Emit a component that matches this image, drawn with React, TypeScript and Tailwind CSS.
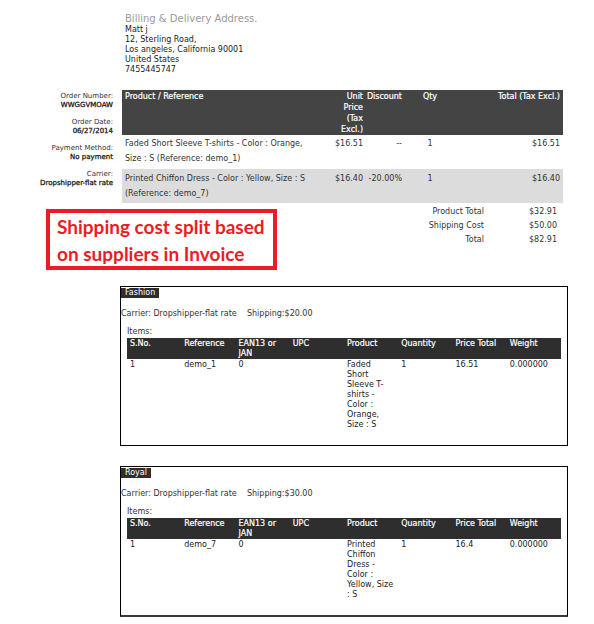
import React from "react";

const font = { fontFamily: "'DejaVu Sans',sans-serif" };

function LeftLabels() {
  const items: [string, string][] = [
    ["Order Number:", "WWGGVMOAW"],
    ["Order Date:", "06/27/2014"],
    ["Payment Method:", "No payment"],
    ["Carrier:", "Dropshipper-flat rate"],
  ];
  return (
    <div className="w-[122px] pr-[9px] pt-[2px] text-right text-[7px] leading-[8.5px] text-[#333] flex flex-col gap-[9px]">
      {items.map(([l, v]) => (
        <div key={l}>
          <div>{l}</div>
          <div className="text-[#111] [-webkit-text-stroke:0.25px_#111]">{v}</div>
        </div>
      ))}
    </div>
  );
}

function MainTable() {
  return (
    <div className="w-[441px]">
      <table className="table-fixed w-[441px] border-collapse text-[8px]">
        <colgroup>
          <col className="w-[208px]" />
          <col className="w-[36px]" />
          <col className="w-[38px]" />
          <col className="w-[52px]" />
          <col className="w-[107px]" />
        </colgroup>
        <thead>
          <tr className="bg-[#444444] text-white align-top leading-[11px] h-[45px] [-webkit-text-stroke:0.2px_#fff]">
            <th className="text-left font-normal px-[3px] pt-[1px]">Product / Reference</th>
            <th className="text-right font-normal pl-0 pr-[3px] pt-[1px]">
              Unit
              <br />
              Price
              <br />
              (Tax
              <br />
              Excl.)
            </th>
            <th className="text-right font-normal pl-0 pr-[2px] pt-[1px] whitespace-nowrap">Discount</th>
            <th className="text-center font-normal px-[3px] pt-[1px]">Qty</th>
            <th className="text-right font-normal px-[3px] pt-[1px]">Total (Tax Excl.)</th>
          </tr>
        </thead>
        <tbody className="text-[#333] leading-[15px] align-top">
          <tr className="bg-white h-[34px]">
            <td className="px-[3px] pt-[1px]">
              Faded Short Sleeve T-shirts - Color : Orange,
              <br />
              Size : S (Reference: demo_1)
            </td>
            <td className="pl-0 pr-[3px] pt-[1px] text-right">$16.51</td>
            <td className="pl-0 pr-[2px] pt-[1px] text-right">--</td>
            <td className="px-[3px] pt-[1px] text-center">1</td>
            <td className="px-[3px] pt-[1px] text-right">$16.51</td>
          </tr>
          <tr className="bg-[#dcdcdc] h-[34px]">
            <td className="px-[3px] pt-[2px]">
              Printed Chiffon Dress - Color : Yellow, Size : S
              <br />
              (Reference: demo_7)
            </td>
            <td className="pl-0 pr-[3px] pt-[2px] text-right">$16.40</td>
            <td className="pl-0 pr-[2px] pt-[2px] text-right whitespace-nowrap">-20.00%</td>
            <td className="px-[3px] pt-[2px] text-center">1</td>
            <td className="px-[3px] pt-[2px] text-right">$16.40</td>
          </tr>
        </tbody>
      </table>
    </div>
  );
}

type Item = { sno: string; ref: string; ean: string; upc: string; product: string[]; qty: string; price: string; weight: string };

function SupplierBox({ name, shipping, item, h }: { name: string; shipping: string; item: Item; h: string }) {
  const cells: React.ReactNode[] = [
    item.sno,
    item.ref,
    item.ean,
    item.upc,
    item.product.map((l, i) => (
      <div key={i} className="whitespace-nowrap">
        {l}
      </div>
    )),
    item.qty,
    item.price,
    item.weight,
  ];
  return (
    <div className={`ml-[120px] w-[448px] border border-black ${h} text-[8px] text-[#333]`}>
      <div className="inline-block bg-[#2e2e2e] text-white px-[4px] leading-[10px] h-[10px] text-[8px]">{name}</div>
      <div className="mt-[9px] leading-[12px] whitespace-pre">{"Carrier: Dropshipper-flat rate    Shipping:" + shipping}</div>
      <div className="mx-[6px] mt-[7px]">
        <div className="leading-[10px]">Items:</div>
        <table className="table-fixed w-full border-collapse mt-[1px]">
          <tbody>
            <tr className="bg-[#2e2e2e] text-white align-top leading-[10px] h-[20px] [-webkit-text-stroke:0.2px_#fff]">
              {["S.No.", "Reference", "EAN13 or JAN", "UPC", "Product", "Quantity", "Price Total", "Weight"].map((t) => (
                <td key={t} className="px-[3px] w-[54px] pt-[1px]">
                  {t}
                </td>
              ))}
            </tr>
            <tr className="align-top leading-[10px] text-[#222]">
              {cells.map((t, i) => (
                <td key={i} className="px-[3px] pt-[1px]">
                  {t}
                </td>
              ))}
            </tr>
          </tbody>
        </table>
      </div>
    </div>
  );
}

export default function App() {
  return (
    <div className="w-[594px] h-[624px] bg-white overflow-hidden" style={font}>
      <div className="pl-[125px] pt-[13px]">
        <div className="text-[10px] leading-[12px] text-[#9a9a9a]">Billing &amp; Delivery Address.</div>
        <div className="text-[8px] leading-[10px] text-[#222]">
          <div>Matt j</div>
          <div>12, Sterling Road,</div>
          <div>Los angeles, California 90001</div>
          <div>United States</div>
          <div>7455445747</div>
        </div>
      </div>
      <div className="flex mt-[15px]">
        <LeftLabels />
        <MainTable />
      </div>
      <div className="flex items-start">
        <div
          className="ml-[46px] mt-[6px] w-[231px] h-[61px] border-[4px] border-[#ed1c24] pl-[7px] text-[#ed1c24] font-bold text-[19px] leading-[27px] whitespace-nowrap"
          style={{ fontFamily: "Lato, sans-serif" }}
        >
          <div>Shipping cost split based</div>
          <div>on suppliers in Invoice</div>
        </div>
        <div className="ml-auto mr-[37px] mt-[2px] text-[8px] leading-[14px] text-[#333] grid grid-cols-[auto_73px]">
          <div className="text-right">Product Total</div>
          <div className="text-right">$32.91</div>
          <div className="text-right">Shipping Cost</div>
          <div className="text-right">$50.00</div>
          <div className="text-right">Total</div>
          <div className="text-right">$82.91</div>
        </div>
      </div>
      <div className="mt-[16px]">
        <SupplierBox
          name="Fashion"
          shipping="$20.00"
          h="h-[160px]"
          item={{
            sno: "1",
            ref: "demo_1",
            ean: "0",
            upc: "",
            product: ["Faded", "Short", "Sleeve T-", "shirts -", "Color :", "Orange,", "Size : S"],
            qty: "1",
            price: "16.51",
            weight: "0.000000",
          }}
        />
      </div>
      <div className="mt-[20px]">
        <SupplierBox
          name="Royal"
          shipping="$30.00"
          h="h-[151px] border-b-2 border-b-[#3a3a3a]"
          item={{
            sno: "1",
            ref: "demo_7",
            ean: "0",
            upc: "",
            product: ["Printed", "Chiffon", "Dress -", "Color :", "Yellow, Size", ": S"],
            qty: "1",
            price: "16.4",
            weight: "0.000000",
          }}
        />
      </div>
    </div>
  );
}
